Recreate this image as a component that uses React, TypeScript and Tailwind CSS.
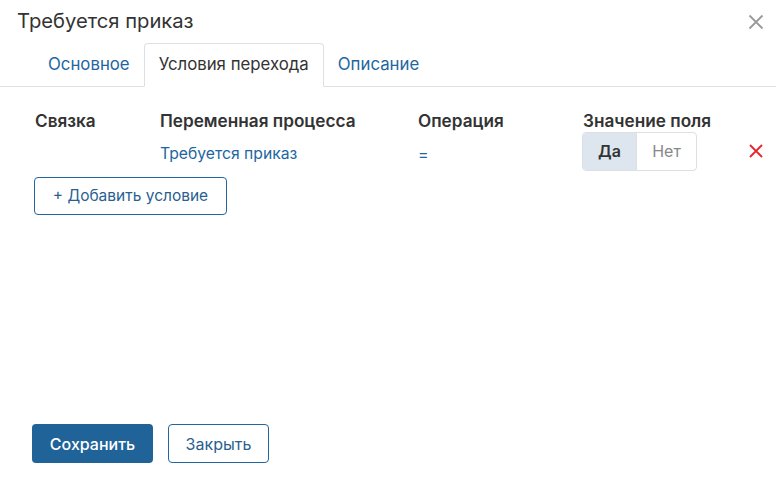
import React from "react";

export default function App() {
  const font = { fontFamily: "Inter, 'Noto Sans', sans-serif" };
  return (
    <div className="w-[776px] h-[481px] bg-white flex flex-col text-[#333]" style={font}>
      <div className="flex items-start justify-between pl-[17px] pr-[10px] pt-[7px] h-[43px]">
        <div className="text-[20.2px] leading-[28px] text-[#333]">Требуется приказ</div>
        <button className="mt-[5px] w-[20px] h-[20px] flex items-center justify-center">
          <svg width="16" height="16" viewBox="0 0 16 16" fill="none" stroke="#9a9a9a" strokeWidth="1.8">
            <path d="M1.5 1.5 L14.5 14.5 M14.5 1.5 L1.5 14.5" />
          </svg>
        </button>
      </div>
      <div className="flex pl-[34px] border-b border-[#dcdfe4] h-[44px] items-end">
        <div className="px-[14px] h-[43px] flex items-center text-[16.8px] text-[#21669f]">Основное</div>
        <div className="px-[14px] h-[44px] mb-[-1px] flex items-center text-[16.8px] text-[#333] bg-white border border-[#dcdfe4] border-b-white rounded-t-[4px]">
          Условия перехода
        </div>
        <div className="px-[14px] h-[43px] flex items-center text-[16.8px] text-[#21669f]">Описание</div>
      </div>
      <div className="pl-[34px] pr-[10px]">
        <div className="grid grid-cols-[126px_258px_165px_165px_1fr] items-center h-[44px] mt-[12px] text-[17.2px] font-semibold text-[#333]">
          <div className="pl-[1px]">Связка</div>
          <div>Переменная процесса</div>
          <div>Операция</div>
          <div>Значение поля</div>
          <div></div>
        </div>
        <div className="grid grid-cols-[126px_258px_164px_166px_1fr] items-center h-[40px] mt-[-12px] text-[15.7px]">
          <div></div>
          <div className="text-[#21669f] pt-[5px]">Требуется приказ</div>
          <div className="text-[#21669f] text-[16px] pt-[5px]">=</div>
          <div>
            <div className="inline-flex h-[39px] border border-[#dcdfe4] rounded-[4px] overflow-hidden text-[16px]">
              <div className="w-[54px] flex items-center justify-center bg-[#dde6ef] font-semibold text-[#333] border-r border-[#dcdfe4]">Да</div>
              <div className="w-[59px] flex items-center justify-center text-[#888]">Нет</div>
            </div>
          </div>
          <div className="flex items-center pl-[1px]">
            <svg width="14" height="14" viewBox="0 0 14 14" fill="none" stroke="#e8262b" strokeWidth="1.8">
              <path d="M1 1 L13 13 M13 1 L1 13" />
            </svg>
          </div>
        </div>
        <button className="mt-[6px] h-[38px] w-[193px] border border-[#21669f] rounded-[4px] text-[15.5px] text-[#2a5f8f] flex items-center justify-center">
          + Добавить условие
        </button>
      </div>
      <div className="mt-auto flex gap-[15px] pl-[32px] pb-[18px]">
        <button className="h-[39px] w-[121px] bg-[#1f6399] rounded-[4px] text-white text-[16px] font-medium">Сохранить</button>
        <button className="h-[39px] w-[101px] border border-[#21669f] rounded-[4px] text-[#2a5f8f] text-[16px]">Закрыть</button>
      </div>
    </div>
  );
}
